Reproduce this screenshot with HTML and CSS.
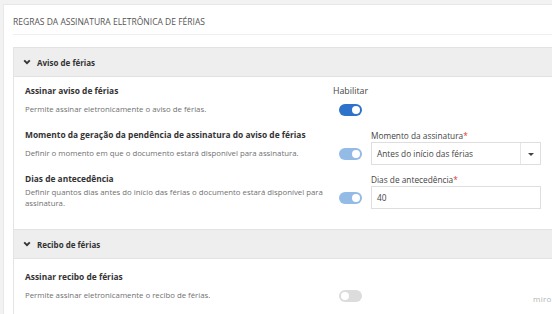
FILE: index.html
```html
<!DOCTYPE html>
<html lang="pt-BR">
<head>
    <meta charset="UTF-8">
    <meta name="viewport" content="width=device-width, initial-scale=1.0">
    <title>Regras da assinatura eletrônica de férias</title>
    <link rel="stylesheet" href="styles.css">
</head>
<body>
    <div class="card">
        <h1 class="card-title">REGRAS DA ASSINATURA ELETRÔNICA DE FÉRIAS</h1>

        <section class="panel">
            <header class="panel-header">
                <svg class="chevron" viewBox="0 0 10 10"><path d="M1.5 3 L5 6.5 L8.5 3" /></svg>
                <span>Aviso de férias</span>
            </header>
            <div class="panel-body">
                <div class="row">
                    <div class="row-title">Assinar aviso de férias</div>
                    <div class="field-label switch-label">Habilitar</div>
                    <div></div>
                    <div class="row-desc">Permite assinar eletronicamente o aviso de férias.</div>
                    <div class="center"><span class="toggle on"></span></div>
                    <div></div>
                </div>

                <div class="row">
                    <div class="row-title">Momento da geração da pendência de assinatura do aviso de férias</div>
                    <div></div>
                    <div class="field-label">Momento da assinatura<span class="req">*</span></div>
                    <div class="row-desc">Definir o momento em que o documento estará disponível para assinatura.</div>
                    <div class="center"><span class="toggle on disabled"></span></div>
                    <div class="select">
                        <span class="select-value">Antes do início das férias</span>
                        <span class="select-arrow"></span>
                    </div>
                </div>

                <div class="row">
                    <div class="row-title">Dias de antecedência</div>
                    <div></div>
                    <div class="field-label">Dias de antecedência<span class="req">*</span></div>
                    <div class="row-desc">Definir quantos dias antes do início das férias o documento estará disponível para assinatura.</div>
                    <div class="center"><span class="toggle on disabled"></span></div>
                    <div class="input">40</div>
                </div>
            </div>
        </section>

        <section class="panel">
            <header class="panel-header">
                <svg class="chevron" viewBox="0 0 10 10"><path d="M1.5 3 L5 6.5 L8.5 3" /></svg>
                <span>Recibo de férias</span>
            </header>
            <div class="panel-body last">
                <div class="row">
                    <div class="row-title">Assinar recibo de férias</div>
                    <div></div>
                    <div></div>
                    <div class="row-desc">Permite assinar eletronicamente o recibo de férias.</div>
                    <div class="center"><span class="toggle"></span></div>
                    <div></div>
                </div>
            </div>
        </section>
    </div>

    <div class="watermark">miro</div>
</body>
</html>
```

FILE: styles.css
```css
body {
    font-family: "Open Sans", Arial, sans-serif;
    margin: 0;
    padding: 4px 0 0 3px;
    background-color: #f2f2f2;
    color: #333;
    overflow: hidden;
    height: 314px;
    box-sizing: border-box;
}
.card {
    width: 620px;
    background-color: #fff;
    border: 1px solid #e8e8e8;
    padding: 0 0 0 9px;
    box-sizing: border-box;
    height: 340px;
}
.card-title {
    margin: 0;
    font-size: 8.5px;
    font-weight: 400;
    color: #555;
    height: 29px;
    line-height: 33px;
    border-bottom: 1px solid #efefef;
    margin-bottom: 12px;
}
.panel {
    border-left: 1px solid #e4e4e4;
}
.panel-header {
    display: flex;
    align-items: center;
    gap: 6px;
    height: 28px;
    padding-left: 9px;
    background-color: #eeeeee;
    border-top: 1px solid #e2e2e2;
    border-bottom: 1px solid #e2e2e2;
    font-size: 8px;
    font-weight: 700;
    color: #333;
}
.chevron {
    width: 8px;
    height: 8px;
    fill: none;
    stroke: #333;
    stroke-width: 2.4;
}
.panel-body {
    padding: 7px 0 20px 11px;
}
.panel-body.last {
    padding-top: 11px;
}
.row {
    display: grid;
    grid-template-columns: 305px 41px 170px;
    grid-template-rows: 12px minmax(23px, auto);
    row-gap: 2px;
    align-items: center;
    margin-bottom: 7px;
}
.row:last-child {
    margin-bottom: 0;
}
.row-title {
    font-size: 8.4px;
    font-weight: 700;
    color: #333;
    white-space: nowrap;
}
.row-desc {
    font-size: 7.8px;
    color: #707070;
    line-height: 11px;
    padding-right: 5px;
}
.field-label {
    font-size: 8.3px;
    color: #444;
    white-space: nowrap;
    padding-top: 2px;
}
.field-label .req {
    color: #e0392f;
}
.switch-label {
    display: flex;
    justify-content: center;
    font-size: 8.8px;
}
.center {
    display: flex;
    justify-content: center;
}
.toggle {
    position: relative;
    display: block;
    width: 23px;
    height: 12px;
    border-radius: 6px;
    background-color: #dcdcdc;
}
.toggle::after {
    content: "";
    position: absolute;
    top: 2px;
    left: 2px;
    width: 8px;
    height: 8px;
    border-radius: 50%;
    background-color: #fff;
}
.toggle.on {
    background-color: #2f72c9;
}
.toggle.on::after {
    left: 13px;
}
.toggle.on.disabled {
    background-color: #93bbe6;
}
.select, .input {
    display: flex;
    align-items: center;
    height: 23px;
    border: 1px solid #dedede;
    box-sizing: border-box;
    font-size: 8.3px;
    color: #444;
    padding-left: 5px;
}
.select-value {
    flex: 1;
}
.select-arrow {
    position: relative;
    width: 19px;
    height: 100%;
    border-left: 1px solid #e6e6e6;
}
.select-arrow::after {
    content: "";
    position: absolute;
    top: 10px;
    left: 7px;
    border-left: 3px solid transparent;
    border-right: 3px solid transparent;
    border-top: 3px solid #444;
}
.watermark {
    position: absolute;
    left: 533px;
    top: 293px;
    font-size: 8px;
    color: #b5b5b5;
    letter-spacing: 0.3px;
}
```
